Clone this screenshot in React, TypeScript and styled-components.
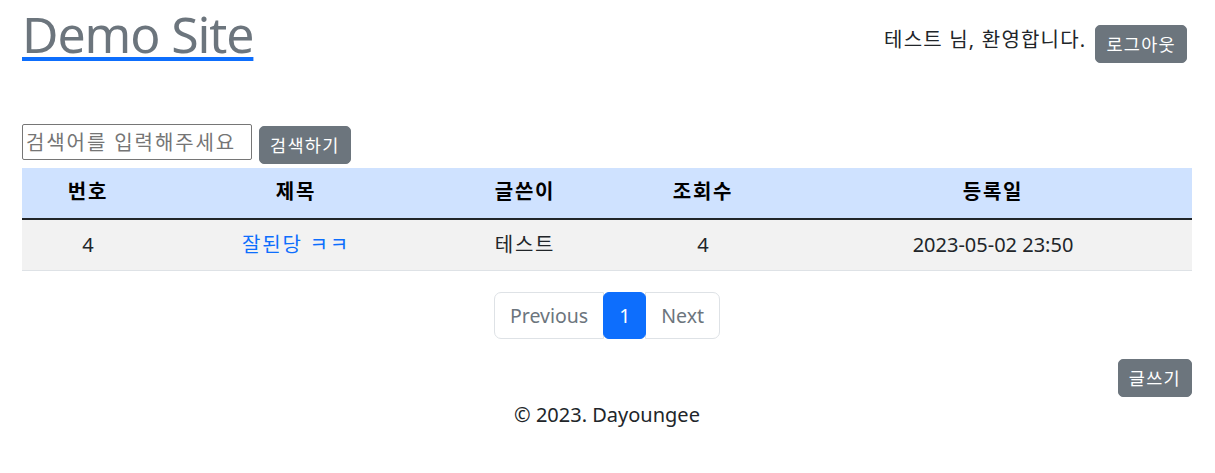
import React from "react";
import styled, { createGlobalStyle } from "styled-components";

const GlobalStyle = createGlobalStyle`
  html, body { margin: 0; padding: 0; background: #ffffff; }
  body {
    font-family: "Noto Sans", "Noto Sans CJK KR", sans-serif;
    font-size: 20px;
    line-height: 1.5;
    color: #212529;
  }
  * { box-sizing: border-box; }
`;

const Page = styled.div`
  padding: 4px 23px 0 22px;
`;

const Header = styled.header`
  display: flex;
  justify-content: space-between;
  align-items: flex-start;
`;

const Brand = styled.a`
  font-size: 50px;
  line-height: 60px;
  font-weight: 400;
  color: #6c757d;
  text-decoration: underline;
  text-decoration-color: #0d6efd;
  text-decoration-thickness: 4px;
  text-underline-offset: 4px;
  letter-spacing: -1.1px;
  cursor: pointer;
`;

const UserBox = styled.div`
  display: flex;
  align-items: center;
  gap: 9px;
  padding-top: 21px;
  padding-right: 5px;
`;

const Welcome = styled.span`
  font-size: 20px;
  line-height: 30px;
  margin-top: -9px;
  letter-spacing: 1.2px;
`;

const Button = styled.button`
  font-family: inherit;
  font-size: 17.5px;
  line-height: 26px;
  height: 38px;
  padding: 0 10px;
  border: 1px solid #6c757d;
  border-radius: 5px;
  background: #6c757d;
  color: #ffffff;
  letter-spacing: 1.3px;
  cursor: pointer;
`;

const SearchRow = styled.form`
  display: flex;
  align-items: flex-start;
  gap: 7px;
  margin-top: 60px;
`;

const SearchInput = styled.input`
  width: 230px;
  height: 36px;
  padding: 1px 3px;
  font-family: inherit;
  font-size: 20px;
  letter-spacing: 1.9px;
  border: 1px solid #767676;
  border-radius: 2px;
  color: #212529;
  &::placeholder { color: #757575; }
`;

const SearchButton = styled(Button)`
  margin-top: 2px;
`;

const Table = styled.div`
  margin-top: 4px;
  display: grid;
  grid-template-columns: 132px 284px 174px 182px 1fr;
`;

const HeadCell = styled.div`
  background: #cfe2ff;
  height: 52px;
  padding-bottom: 2px;
  border-bottom: 2px solid #212529;
  display: flex;
  align-items: center;
  justify-content: center;
  font-weight: 700;
  letter-spacing: 1.8px;
  color: #000000;
`;

const Cell = styled.div<{ $ko?: boolean }>`
  background: #f2f2f2;
  height: 51px;
  border-bottom: 1px solid #dee2e6;
  display: flex;
  align-items: center;
  justify-content: center;
  letter-spacing: ${(p) => (p.$ko ? "1.8px" : "0")};
  color: #212529;
`;

const TitleLink = styled.a`
  color: #0d6efd;
  text-decoration: none;
  cursor: pointer;
`;

const PagerWrap = styled.nav`
  display: flex;
  justify-content: center;
  margin-top: 21px;
`;

const Pager = styled.ul`
  display: flex;
  list-style: none;
  margin: 0;
  padding: 0;
`;

const PageItem = styled.li<{ $active?: boolean; $pos?: "first" | "last" }>`
  height: 47px;
  padding: 0 15px;
  display: flex;
  align-items: center;
  font-size: 19.5px;
  border: 1px solid ${(p) => (p.$active ? "#0d6efd" : "#dee2e6")};
  margin-left: ${(p) => (p.$pos === "first" ? "0" : "-1px")};
  background: ${(p) => (p.$active ? "#0d6efd" : "#ffffff")};
  color: ${(p) => (p.$active ? "#ffffff" : "#6c757d")};
  border-radius: ${(p) =>
    p.$active
      ? "6px"
      : p.$pos === "first"
      ? "7px 0 0 7px"
      : p.$pos === "last"
      ? "0 7px 7px 0"
      : "0"};
  position: relative;
  z-index: ${(p) => (p.$active ? 1 : 0)};
  cursor: pointer;
`;

const WriteRow = styled.div`
  display: flex;
  justify-content: flex-end;
  margin-top: 20px;
`;

const Footer = styled.footer`
  text-align: center;
  margin-top: 3px;
  line-height: 30px;
  font-size: 20px;
  color: #212529;
`;

const columns = ["번호", "제목", "글쓴이", "조회수", "등록일"];

export default function App() {
  return (
    <>
      <GlobalStyle />
      <Page>
        <Header>
          <Brand>Demo Site</Brand>
          <UserBox>
            <Welcome>테스트 님, 환영합니다.</Welcome>
            <Button type="button">로그아웃</Button>
          </UserBox>
        </Header>

        <SearchRow onSubmit={(e) => e.preventDefault()}>
          <SearchInput placeholder="검색어를 입력해주세요" />
          <SearchButton type="submit">검색하기</SearchButton>
        </SearchRow>

        <Table>
          {columns.map((c) => (
            <HeadCell key={c}>{c}</HeadCell>
          ))}
          <Cell>4</Cell>
          <Cell $ko>
            <TitleLink>잘된당 ㅋㅋ</TitleLink>
          </Cell>
          <Cell $ko>테스트</Cell>
          <Cell>4</Cell>
          <Cell>2023-05-02 23:50</Cell>
        </Table>

        <PagerWrap>
          <Pager>
            <PageItem $pos="first">Previous</PageItem>
            <PageItem $active>1</PageItem>
            <PageItem $pos="last">Next</PageItem>
          </Pager>
        </PagerWrap>

        <WriteRow>
          <Button type="button">글쓰기</Button>
        </WriteRow>

        <Footer>© 2023. Dayoungee</Footer>
      </Page>
    </>
  );
}
